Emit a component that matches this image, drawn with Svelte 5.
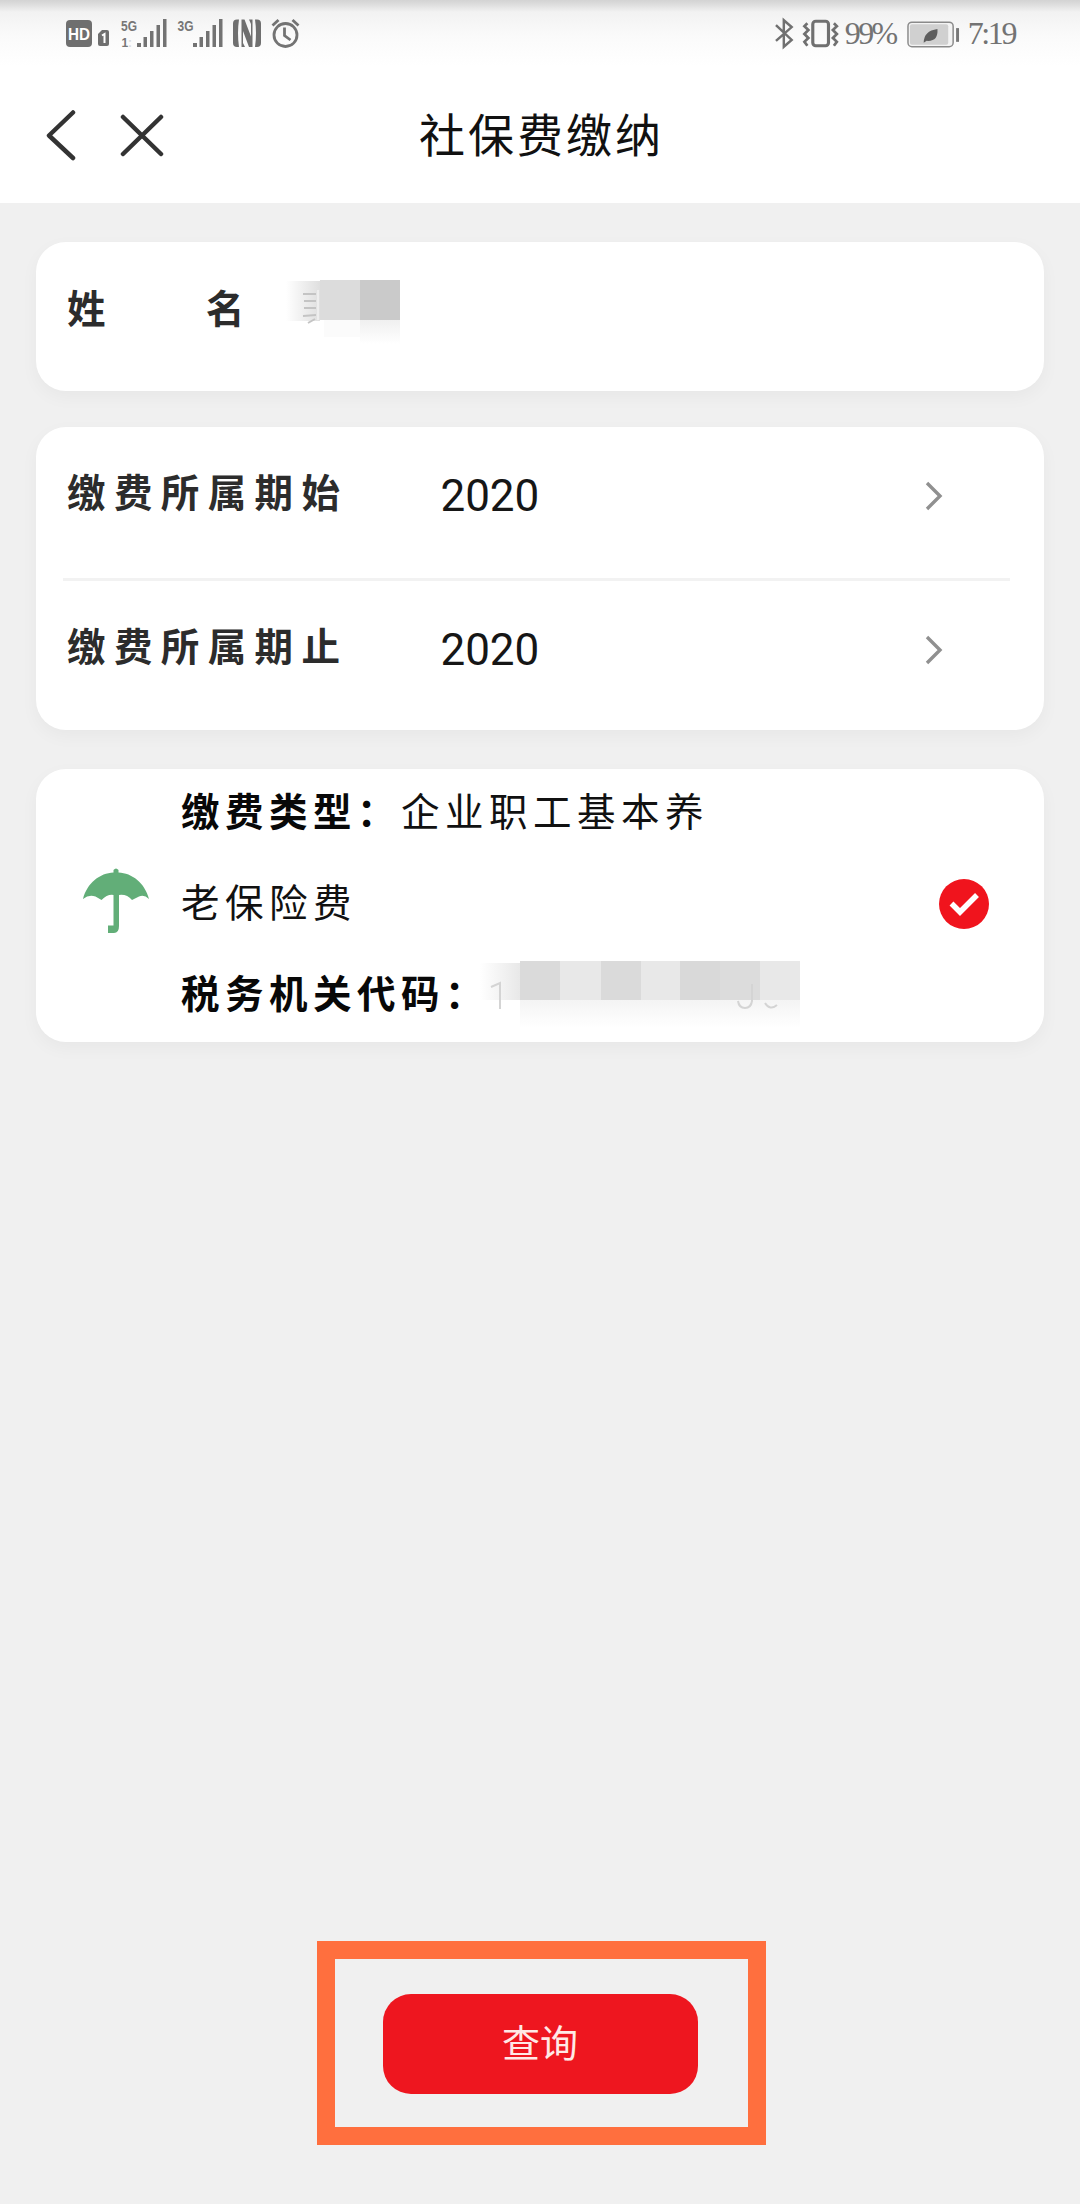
<script>
  const periods = [
    { label: '缴费所属期始', value: '2020' },
    { label: '缴费所属期止', value: '2020' }
  ];
</script>

<div class="screen">
  <header>
    <div class="status">
      <svg class="status-left" width="236" height="34" viewBox="0 0 236 34">
        <rect x="1" y="4" width="26" height="27" rx="4" fill="#6f6f6f" />
        <text x="14" y="24" class="hd" text-anchor="middle" textLength="22" lengthAdjust="spacingAndGlyphs">HD</text>
        <path d="M33 18l4-4h5q2 0 2 2v12q0 2-2 2h-7q-2 0-2-2z" fill="#6f6f6f" />
        <path d="M37 19.500l2.500-1.500v9" stroke="#fff" stroke-width="2" fill="none" />
        <text x="56" y="15" class="net" textLength="16" lengthAdjust="spacingAndGlyphs">5G</text>
        <text x="56.500" y="31" class="one">1</text>
        <text x="63" y="31" class="one faint">:</text>
        <g fill="#737373">
          <rect x="72" y="27" width="4" height="4" /><rect x="78.500" y="21" width="3.500" height="10" />
          <rect x="85" y="15" width="3.500" height="16" /><rect x="91.500" y="9" width="3.500" height="22" />
          <rect x="98" y="3" width="3.500" height="28" />
        </g>
        <text x="112.500" y="15" class="net" textLength="16" lengthAdjust="spacingAndGlyphs">3G</text>
        <g fill="#737373">
          <rect x="128" y="27" width="4" height="4" /><rect x="134.500" y="21" width="3.500" height="10" />
          <rect x="141" y="15" width="3.500" height="16" /><rect x="147.500" y="9" width="3.500" height="22" />
          <rect x="154" y="3" width="3.500" height="28" />
        </g>
        <path d="M174 3.500h-2q-4 0-4 4v19.500q0 4 4 4h2q-2-14 0-27.500z" fill="#6f6f6f" />
        <path d="M190 3.500h2q4 0 4 4v19.500q0 4-4 4h-2q2-14 0-27.500z" fill="#6f6f6f" />
        <path d="M176.500 3.500h3l6.500 17V8l-2-4.500h3.500V31H184l-6-16v12l2 4h-3.500z" fill="#6f6f6f" />
        <g fill="none" stroke="#737373" stroke-width="2.800">
          <circle cx="220.500" cy="19" r="11.500" />
          <path d="M219.500 11.500v8l6 4.500M207.500 9.500l6-5.500M233.500 9.500l-6-5.500" />
        </g>
      </svg>
      <div class="status-right">
        <svg width="66" height="34" viewBox="0 0 66 34" fill="none" stroke="#707070">
          <path d="M2 9l16 15-8 7V4l8 7L2 25" stroke-width="2.500" />
          <rect x="39.500" y="5" width="16" height="25" rx="3" stroke-width="3.200" />
          <path d="M34 7l-3 3 4 4-4 4 4 4-4 4 3 4M61 7l3 3-4 4 4 4-4 4 4 4-3 4" stroke-width="2.800" />
        </svg>
        <span class="pct">99%</span>
        <svg class="battery" width="54" height="34" viewBox="0 0 54 34">
          <rect x="1" y="6" width="46" height="25" rx="4" fill="#f3f3f3" stroke="#8a8a8a" stroke-width="1.500" />
          <rect x="3" y="8" width="39" height="21" rx="2" fill="#d0d0d0" />
          <path d="M50 12h3v14h-3z" fill="#777" />
          <path d="M17 27q0-12 14-14 1 13-11 12z" fill="#5d5d5d" />
        </svg>
        <span class="clock">7:19</span>
      </div>
    </div>
    <div class="nav">
      <svg width="120" height="52" viewBox="0 0 120 52" fill="none" stroke="#333" stroke-width="4.500" stroke-linecap="round" stroke-linejoin="round">
        <path d="M29 3.500L5 26.500l24 22.500M79 8l38 37M117 8L79 45" />
      </svg>
      <h1>社保费缴纳</h1>
    </div>
  </header>

  <main>
    <section class="card name">
      <span class="label">姓</span><span class="label">名</span>
      <svg class="mask" width="120" height="68" viewBox="0 0 120 68">
        <defs>
          <linearGradient id="fadeIn"><stop offset="0" stop-color="#fff" /><stop offset="1" stop-color="#dfdfdf" /></linearGradient>
          <linearGradient id="fadeDown" x2="0" y2="1"><stop offset="0" stop-color="#f0f0f0" /><stop offset="1" stop-color="#fff" /></linearGradient>
        </defs>
        <rect x="2" y="1" width="34" height="40" fill="url(#fadeIn)" />
        <rect x="36" y="0" width="40" height="40" fill="#dcdcdc" />
        <rect x="76" y="0" width="40" height="40" fill="#cacaca" />
        <rect x="40" y="40" width="36" height="17" fill="#fbfbfb" />
        <rect x="76" y="40" width="40" height="24" fill="url(#fadeDown)" />
        <path d="M19 14h13M20 21h12M20 28h12M19 36l13-1M24 43l7-4" stroke="#c4c4c4" stroke-width="2" fill="none" />
        <path d="M34 10v30" stroke="#eee" stroke-width="2" />
      </svg>
    </section>

    <section class="card periods">
      {#each periods as p}
        <div class="row">
          <span class="label">{p.label}</span>
          <span class="value">{p.value}</span>
          <svg width="20" height="32" viewBox="0 0 20 32" fill="none" stroke="#909090" stroke-width="3.400"><path d="M3 3l13 13L3 29" /></svg>
        </div>
      {/each}
    </section>

    <section class="card type">
      <svg class="umbrella" width="68" height="66" viewBox="0 0 68 66">
        <path d="M1 31C5 15 18 5 31.500 4.500V2q2.500-3 5 0v2.500C50 5 63 15 67 31q-5-5-10-2.500L50 32q-5-6-13-5v31q0 7-5 7h-6v-7.500h5.500V27q-6-1-12 5l-6-3.500Q7 26 1 31z" fill="#62ae78" />
      </svg>
      <div class="lines">
        <p><b>缴费类型：</b>企业职工基本养</p>
        <p>老保险费</p>
        <p class="code">
          <b>税务机关代码：</b>
          <svg width="324" height="68" viewBox="0 0 324 68">
            <defs>
              <linearGradient id="edge"><stop offset="0" stop-color="#fff" /><stop offset="1" stop-color="#e8e8e8" /></linearGradient>
              <linearGradient id="drop" x2="0" y2="1"><stop offset="0" stop-color="#f4f4f4" /><stop offset="1" stop-color="#fff" /></linearGradient>
            </defs>
            <rect x="4" y="2" width="40" height="37" fill="url(#edge)" />
            <rect x="44" y="39" width="280" height="28" fill="url(#drop)" />
            <rect x="44" y="0" width="280" height="39" fill="#e8e8e8" />
            <rect x="44" width="40" height="39" fill="#dadada" /><rect x="125" width="40" height="39" fill="#dadada" />
            <rect x="204" width="40" height="39" fill="#d9d9d9" /><rect x="244" width="40" height="39" fill="#dcdcdc" />
            <g fill="none" stroke="#d4d4d4" stroke-width="2">
              <path d="M15 26l9-4v26M262 40q1 7 7 7t7-7V23M289 42q5 8 12 2" />
            </g>
          </svg>
        </p>
      </div>
      <svg class="check" width="52" height="52" viewBox="0 0 52 52">
        <circle cx="26" cy="26" r="25" fill="#f0141d" />
        <path d="M13.500 25.500l8.500 8.500L39 17" stroke="#fff" stroke-width="5.500" fill="none" />
      </svg>
    </section>
  </main>

  <footer>
    <div class="frame"><button>查询</button></div>
  </footer>
</div>

<style>
  :global(body) { margin: 0; }
  .screen {
    width: 1080px; height: 2204px; box-sizing: border-box;
    display: flex; flex-direction: column;
    background: #f0f0f0; color: #111;
    font-family: "Noto Sans CJK SC", sans-serif;
  }
  header { height: 203px; background: linear-gradient(#d3d3d3 0, #dcdcdc 4px, #f2f2f2 12px, #fafafa 35px, #fff 66px); }
  .status { height: 64px; padding: 16px 65px 0; display: flex; justify-content: space-between; box-sizing: border-box; }
  .status-left { display: block; }
  .hd { font: 700 16px "Liberation Sans", sans-serif; fill: #fff; }
  .net { font: 700 15px "Liberation Sans", sans-serif; fill: #777; }
  .one { font: 700 12px "Liberation Sans", sans-serif; fill: #777; }
  .faint { fill: #ddd; }
  .status-right { display: flex; width: 241px; height: 34px; font: 32px/34px "Liberation Serif", serif; color: #737373; }
  .pct { width: 60px; margin-left: 6px; letter-spacing: -2.600px; }
  .battery { margin: 0 8px 0 3px; }
  .clock { letter-spacing: -2.400px; white-space: nowrap; }
  .nav { height: 139px; display: grid; grid-template-columns: 375px 1fr 375px; padding: 0 44px; box-sizing: border-box; }
  .nav svg { margin-top: 45px; }
  h1 { margin: 32px 0 0; text-align: center; font-size: 46px; line-height: 72px; font-weight: 400; letter-spacing: 3px; white-space: nowrap; }
  main { padding: 39px 36px 0; display: flex; flex-direction: column; }
  .card { background: #fff; border-radius: 30px; box-shadow: 0 6px 18px rgba(0, 0, 0, 0.04); box-sizing: border-box; }
  .label { font-size: 38.500px; line-height: 56px; font-weight: 700; color: #2c2c2c; letter-spacing: 8.400px; white-space: nowrap; }
  .name { height: 149px; padding: 36px 30px 0 31px; display: flex; }
  .name .label { width: 139px; letter-spacing: 0; }
  .mask { margin: 2px 0 0 -61px; }
  .periods { height: 303px; margin-top: 36px; padding: 0 34px 0 27px; }
  .row { height: 151px; display: flex; padding: 35px 66px 0 4px; box-sizing: border-box; }
  .row + .row { border-top: 3px solid #f2f2f2; height: 152px; }
  .row .value { margin-left: 92px; flex: 1; font: 44px/56px Roboto, sans-serif; color: #161616; padding-top: 6px; }
  .row svg { margin-top: 18px; }
  .type { height: 273px; margin-top: 39px; padding: 0 54px 0 46px; display: flex; }
  .umbrella { margin-top: 99px; }
  .lines { flex: 1; padding: 8px 0 0 31px; }
  p { margin: 0; font-size: 38.500px; line-height: 91px; height: 91px; letter-spacing: 5.500px; white-space: nowrap; }
  b { color: #080808; }
  p:first-child { margin-top: -13px; }
  .code { display: flex; }
  .code svg { margin: 15px 0 0 -13px; }
  .check { margin-top: 108.500px; }
  footer { margin-top: auto; padding-bottom: 59px; display: flex; justify-content: center; }
  .frame { width: 449px; height: 204px; border: 18px solid #ff6f3e; box-sizing: border-box; display: flex; justify-content: center; align-items: center; margin-left: 2px; }
  button { width: 315px; height: 100px; border: 0; border-radius: 28px; background: #ee161f; color: #ffe9e6; font: 38px/56px "Noto Sans CJK SC", sans-serif; padding: 0 0 7px; margin: 2px 2px 0 0; }
</style>
